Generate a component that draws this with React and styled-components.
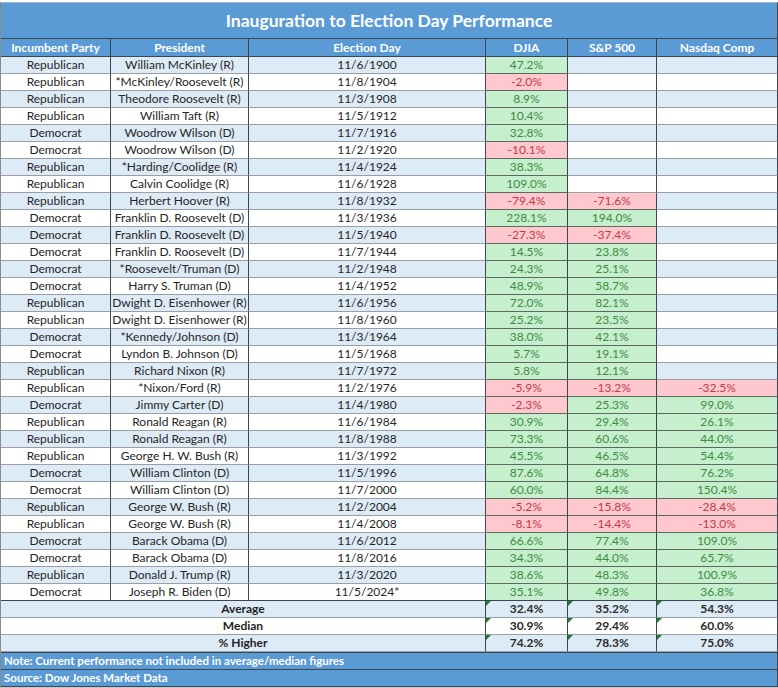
import styled, { createGlobalStyle } from "styled-components";

const GlobalStyle = createGlobalStyle`
  html, body {
    margin: 0;
    padding: 0;
    background: #ffffff;
  }
  body {
    font-family: Lato, "Open Sans", "Liberation Sans", sans-serif;
  }
`;

const rows = [
  ["Republican", "William McKinley (R)", "11/6/1900", "47.2%", "", ""],
  ["Republican", "*McKinley/Roosevelt (R)", "11/8/1904", "-2.0%", "", ""],
  ["Republican", "Theodore Roosevelt (R)", "11/3/1908", "8.9%", "", ""],
  ["Republican", "William Taft (R)", "11/5/1912", "10.4%", "", ""],
  ["Democrat", "Woodrow Wilson (D)", "11/7/1916", "32.8%", "", ""],
  ["Democrat", "Woodrow Wilson (D)", "11/2/1920", "-10.1%", "", ""],
  ["Republican", "*Harding/Coolidge (R)", "11/4/1924", "38.3%", "", ""],
  ["Republican", "Calvin Coolidge (R)", "11/6/1928", "109.0%", "", ""],
  ["Republican", "Herbert Hoover (R)", "11/8/1932", "-79.4%", "-71.6%", ""],
  ["Democrat", "Franklin D. Roosevelt (D)", "11/3/1936", "228.1%", "194.0%", ""],
  ["Democrat", "Franklin D. Roosevelt (D)", "11/5/1940", "-27.3%", "-37.4%", ""],
  ["Democrat", "Franklin D. Roosevelt (D)", "11/7/1944", "14.5%", "23.8%", ""],
  ["Democrat", "*Roosevelt/Truman (D)", "11/2/1948", "24.3%", "25.1%", ""],
  ["Democrat", "Harry S. Truman (D)", "11/4/1952", "48.9%", "58.7%", ""],
  ["Republican", "Dwight D. Eisenhower (R)", "11/6/1956", "72.0%", "82.1%", ""],
  ["Republican", "Dwight D. Eisenhower (R)", "11/8/1960", "25.2%", "23.5%", ""],
  ["Democrat", "*Kennedy/Johnson (D)", "11/3/1964", "38.0%", "42.1%", ""],
  ["Democrat", "Lyndon B. Johnson (D)", "11/5/1968", "5.7%", "19.1%", ""],
  ["Republican", "Richard Nixon (R)", "11/7/1972", "5.8%", "12.1%", ""],
  ["Republican", "*Nixon/Ford (R)", "11/2/1976", "-5.9%", "-13.2%", "-32.5%"],
  ["Democrat", "Jimmy Carter (D)", "11/4/1980", "-2.3%", "25.3%", "99.0%"],
  ["Republican", "Ronald Reagan (R)", "11/6/1984", "30.9%", "29.4%", "26.1%"],
  ["Republican", "Ronald Reagan (R)", "11/8/1988", "73.3%", "60.6%", "44.0%"],
  ["Republican", "George H. W. Bush (R)", "11/3/1992", "45.5%", "46.5%", "54.4%"],
  ["Democrat", "William Clinton (D)", "11/5/1996", "87.6%", "64.8%", "76.2%"],
  ["Democrat", "William Clinton (D)", "11/7/2000", "60.0%", "84.4%", "150.4%"],
  ["Republican", "George W. Bush (R)", "11/2/2004", "-5.2%", "-15.8%", "-28.4%"],
  ["Republican", "George W. Bush (R)", "11/4/2008", "-8.1%", "-14.4%", "-13.0%"],
  ["Democrat", "Barack Obama (D)", "11/6/2012", "66.6%", "77.4%", "109.0%"],
  ["Democrat", "Barack Obama (D)", "11/8/2016", "34.3%", "44.0%", "65.7%"],
  ["Republican", "Donald J. Trump (R)", "11/3/2020", "38.6%", "48.3%", "100.9%"],
  ["Democrat", "Joseph R. Biden (D)", "11/5/2024*", "35.1%", "49.8%", "36.8%"],
];

const summary = [
  ["Average", "32.4%", "35.2%", "54.3%"],
  ["Median", "30.9%", "29.4%", "60.0%"],
  ["% Higher", "74.2%", "78.3%", "75.0%"],
];

const widths = [110, 138, 237, 82, 89, 121];
const headers = ["Incumbent Party", "President", "Election Day", "DJIA", "S&P 500", "Nasdaq Comp"];

function tone(v) {
  if (!v) return null;
  return v.startsWith("-") ? "down" : "up";
}

export default function App() {
  return (
    <Page>
      <GlobalStyle />
      <Sheet>
        <colgroup>
          {widths.map((w, i) => (
            <col key={i} style={{ width: w }} />
          ))}
        </colgroup>
        <thead>
          <tr>
            <Title colSpan={6}>Inauguration to Election Day Performance</Title>
          </tr>
          <tr>
            {headers.map((h) => (
              <Head key={h}>{h}</Head>
            ))}
          </tr>
        </thead>
        <tbody>
          {rows.map((r, i) => (
            <Row key={i} $shade={i % 2 === 0} $rule={i === rows.length - 1}>
              <Cell>{r[0]}</Cell>
              <Cell>{r[1]}</Cell>
              <Cell>{r[2]}</Cell>
              {r.slice(3).map((v, j) => (
                <Perf key={j} $tone={tone(v)}>
                  {v}
                </Perf>
              ))}
            </Row>
          ))}
          {summary.map((s, i) => (
            <Row key={s[0]} $shade={i % 2 === 0}>
              <Label colSpan={3}>{s[0]}</Label>
              {s.slice(1).map((v, j) => (
                <Stat key={j}>{v}</Stat>
              ))}
            </Row>
          ))}
          <tr>
            <Note colSpan={6}>Note: Current performance not included in average/median figures</Note>
          </tr>
          <tr>
            <Note colSpan={6}>Source: Dow Jones Market Data</Note>
          </tr>
        </tbody>
      </Sheet>
    </Page>
  );
}

const Page = styled.div`
  width: 778px;
  height: 688px;
  padding-top: 2px;
  box-sizing: border-box;
  overflow: hidden;
  background: #ffffff;
  border-bottom: 1px solid #c8c8c8;
`;

const Sheet = styled.table`
  width: 778px;
  table-layout: fixed;
  border-collapse: separate;
  border-spacing: 0;
  border-left: 1px solid #8a8a8a;
  border-bottom: 1px solid #3d4650;
  font-size: 12px;
  color: #262626;
`;

const Title = styled.th`
  height: 35px;
  padding: 0;
  background: #5b9bd5;
  color: #ffffff;
  font-size: 17.5px;
  font-weight: 700;
  text-align: center;
  border-right: 1px solid #3d4650;
  border-bottom: 1px solid #3d4650;
  border-top: 1px solid #9fb9d2;
`;

const Head = styled.th`
  height: 17px;
  padding: 0;
  background: #5b9bd5;
  color: #ffffff;
  font-size: 12px;
  font-weight: 700;
  text-align: center;
  border-right: 1px solid #3d4650;
  border-bottom: 1px solid #3d4650;
`;

const Row = styled.tr`
  background: ${(p) => (p.$shade ? "#ddebf7" : "#ffffff")};

  td {
    ${(p) => (p.$rule ? "border-bottom-color: #3d4650;" : "")}
  }
`;

const Cell = styled.td`
  height: 16px;
  padding: 0;
  text-align: center;
  white-space: nowrap;
  line-height: 16px;
  border-right: 1px solid #3d4650;
  border-bottom: 1px solid #9a9fa5;
`;

const Perf = styled(Cell)`
  background: ${(p) =>
    p.$tone === "up" ? "#c6efce" : p.$tone === "down" ? "#ffc7ce" : "transparent"};
  color: ${(p) => (p.$tone === "up" ? "#3d8c40" : "#c23b48")};
  border-bottom-color: ${(p) => (p.$tone ? "#5b6b5e" : "#9a9fa5")};
`;

const Label = styled(Cell)`
  font-weight: 700;
  color: #1f1f1f;
`;

const Stat = styled(Cell)`
  position: relative;
  font-weight: 700;
  color: #2b2b2b;

  &::before {
    content: "";
    position: absolute;
    top: 0;
    left: 0;
    border-top: 5px solid #1e7b34;
    border-right: 5px solid transparent;
  }
`;

const Note = styled.td`
  height: 16px;
  padding: 0 0 0 3px;
  background: #5b9bd5;
  color: #ffffff;
  font-size: 11.5px;
  font-weight: 700;
  text-align: left;
  line-height: 16px;
  border-right: 1px solid #3d4650;
  border-top: 1px solid #3d4650;
`;
